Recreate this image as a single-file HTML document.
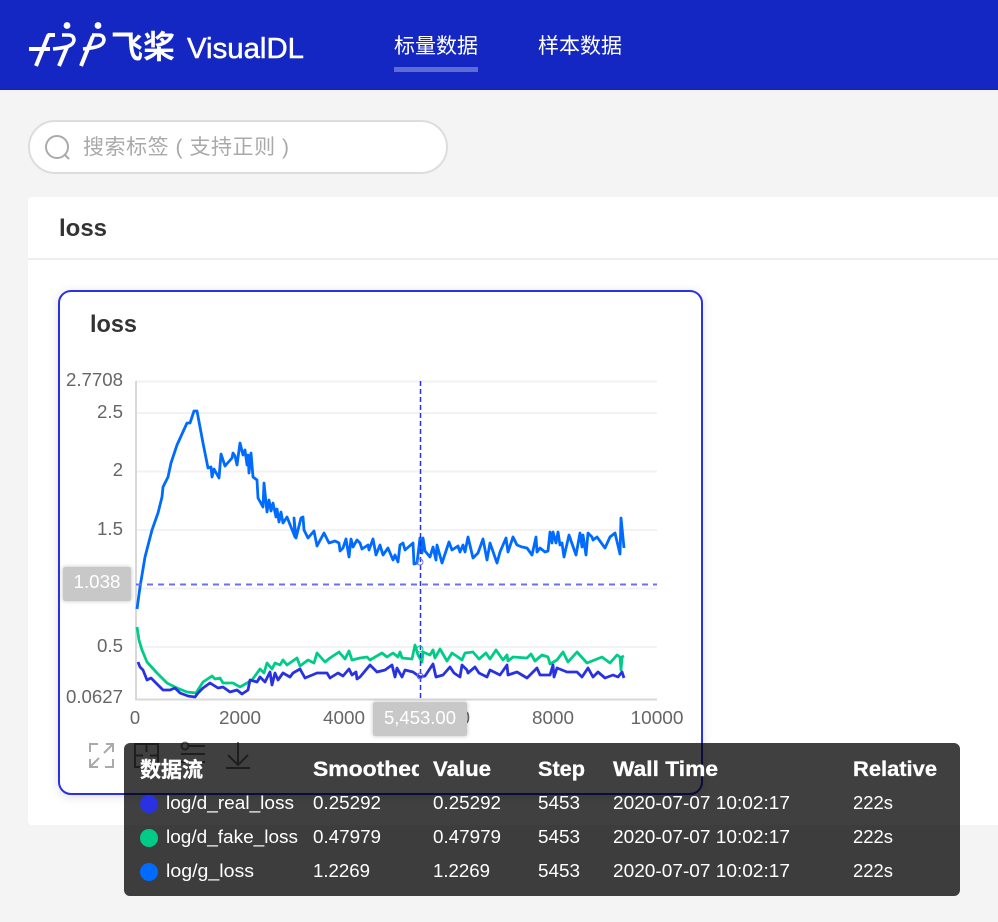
<!DOCTYPE html>
<html><head><meta charset="utf-8"><title>VisualDL</title>
<style>
html,body{margin:0;padding:0;width:998px;height:922px;overflow:hidden;background:#f4f4f4}
svg{position:absolute;left:0;top:0}
text{font-family:"Liberation Sans","Noto Sans CJK SC",sans-serif}
.ax{font-size:18.500px;fill:#666}
.hd{font-size:21px;font-weight:bold;fill:#fff}
.td{font-size:18.500px;fill:#fff}
.ln{fill:none;stroke-width:2.800;stroke-linejoin:round}
</style></head><body>
<svg width="998" height="922" viewBox="0 0 998 922" xmlns="http://www.w3.org/2000/svg">
<defs>
<filter id="sh" x="-20%" y="-20%" width="140%" height="140%"><feDropShadow dx="0" dy="2" stdDeviation="5" flood-color="#000" flood-opacity=".12"/></filter>
<filter id="bx" x="-10%" y="-20%" width="120%" height="140%"><feDropShadow dx="0" dy="0" stdDeviation="2" flood-color="#000" flood-opacity=".25"/></filter>
<clipPath id="cs"><rect x="300" y="750" width="119" height="40"/></clipPath>
</defs>
<rect width="998" height="90" fill="#1527c2"/>
<g fill="none" stroke="#fff" stroke-width="4">
<path d="M29 49H50"/>
<path d="M36 66L48 36L49 35H55"/>
<path d="M59 66L67 47"/>
<path d="M62 35H68C75 35 75 41 72 44C69 47 62 48 53 49" stroke-width="3.600"/>
<path d="M81 66L93 36"/>
<path d="M92 35H98C105 35 105 41 102 44C99 47 92 48 83 49" stroke-width="3.600"/>
</g>
<circle cx="67" cy="25.500" r="3.400" fill="#fff"/><circle cx="98" cy="25.500" r="3.400" fill="#fff"/>
<text x="111" y="58" font-size="32" font-weight="bold" fill="#fff" textLength="64" lengthAdjust="spacingAndGlyphs">飞桨</text>
<text x="187" y="58" font-size="29" fill="#fff" textLength="117" lengthAdjust="spacingAndGlyphs" stroke="#fff" stroke-width=".5">VisualDL</text>
<text x="394" y="53" font-size="21" fill="#fff" textLength="84">标量数据</text>
<rect x="394" y="67" width="84" height="5" fill="#5e6bd1"/>
<text x="538" y="53" font-size="21" fill="#fff" textLength="84">样本数据</text>

<rect x="29" y="121" width="418" height="52" rx="26" fill="#fff" stroke="#ddd" stroke-width="2"/>
<circle cx="57" cy="147" r="11" fill="none" stroke="#aaa" stroke-width="2"/>
<path d="M65 155L69 159" stroke="#aaa" stroke-width="2"/>
<text x="83" y="154" font-size="21" fill="#a9a9a9" textLength="206">搜索标签 ( 支持正则 )</text>

<rect x="28" y="197" width="980" height="628" rx="4" fill="#fff"/>
<rect x="28" y="258" width="970" height="2" fill="#eee"/>
<text x="59" y="236" font-size="24" font-weight="bold" fill="#333" textLength="48" lengthAdjust="spacingAndGlyphs">loss</text>

<rect x="59" y="291" width="643" height="503" rx="12" fill="#fff" stroke="#2932e1" stroke-width="2" filter="url(#sh)"/>
<text x="90" y="332" font-size="24" font-weight="bold" fill="#333" textLength="47" lengthAdjust="spacingAndGlyphs">loss</text>

<g stroke="#f2f2f2" stroke-width="2">
<path d="M136 381.500H657M136 413H657M136 471.500H657M136 530H657M136 588.500H657M136 647H657"/>
</g>
<path d="M136 381V699.500H657" fill="none" stroke="#d8d8d8" stroke-width="2"/>
<g class="ax" text-anchor="end">
<text x="123" y="386" textLength="57" lengthAdjust="spacingAndGlyphs">2.7708</text>
<text x="123" y="418" textLength="26" lengthAdjust="spacingAndGlyphs">2.5</text>
<text x="123" y="476">2</text>
<text x="123" y="535" textLength="26" lengthAdjust="spacingAndGlyphs">1.5</text>
<text x="123" y="652" textLength="26" lengthAdjust="spacingAndGlyphs">0.5</text>
<text x="123" y="703" textLength="57" lengthAdjust="spacingAndGlyphs">0.0627</text>
</g>
<g class="ax" text-anchor="middle">
<text x="135" y="724">0</text>
<text x="240" y="724" textLength="42" lengthAdjust="spacingAndGlyphs">2000</text>
<text x="344" y="724" textLength="42" lengthAdjust="spacingAndGlyphs">4000</text>
<text x="449" y="724" textLength="42" lengthAdjust="spacingAndGlyphs">6000</text>
<text x="553" y="724" textLength="42" lengthAdjust="spacingAndGlyphs">8000</text>
<text x="657" y="724" textLength="53" lengthAdjust="spacingAndGlyphs">10000</text>
</g>

<polyline class="ln" stroke="#006bff" points="137,609 140,587 145,557 152,530 158,513 162,497 163,487 168,477 171,463 177,445 187,423 190,423 194,411 197,411 203,443 208,468 211,467 212,477 214,469 219,478 221,454 225,466 232,458 233,453 235,456 237,465 240,443 243,455 245,450 247,465 248,455 249,473 251,453 253,477 257,480 258,498 263,507 264,483 267,512 269,500 271,511 273,503 276,517 277,509 279,522 281,512 283,523 287,517 295,537 294,518 296,538 301,518 303,517 304,530 308,538 314,531 317,546 324,533 329,543 335,541 339,543 340,551 343,548 346,539 349,557 351,539 353,547 357,540 360,543 362,549 368,545 369,550 373,539 376,555 380,545 383,555 388,548 393,560 395,555 398,562 400,545 403,543 405,550 413,543 414,564 417,563 420,538 422,553 423,538 425,551 430,557 433,547 436,560 437,545 442,563 449,542 452,550 458,546 460,552 463,545 465,552 468,537 473,558 478,553 483,539 487,560 490,543 497,563 500,552 506,538 508,552 513,537 517,545 522,547 527,548 532,555 536,537 537,552 540,548 545,552 548,551 550,532 552,543 553,532 556,543 558,532 560,545 562,543 564,557 569,535 576,555 580,533 582,547 583,535 586,555 588,533 592,537 593,540 597,537 605,548 610,537 615,533 620,554 621,518 624,548"/>
<polyline class="ln" stroke="#00cc88" points="137,627 139,640 142,650 147,662 157,673 167,683 177,688 187,692 196,693 203,682 212,676 215,679 220,678 223,683 233,683 240,687 247,683 252,680 260,669 264,673 267,663 272,669 275,663 280,665 283,660 287,665 297,658 300,666 308,660 314,663 317,653 325,662 330,658 339,652 345,659 349,651 352,660 360,658 367,657 370,660 382,653 387,657 393,653 398,657 400,652 402,658 412,659 415,645 418,655 422,662 423,652 430,655 433,650 435,658 440,649 447,661 452,653 458,657 462,660 465,653 473,652 479,659 486,653 490,659 496,650 503,660 507,655 508,661 513,657 527,658 531,654 535,661 542,655 548,657 550,664 557,660 563,652 568,662 577,652 587,663 602,657 610,663 617,655 620,657 621,670 622,657 624,656"/>
<polyline class="ln" stroke="#2932e1" points="138,662 140,667 143,670 147,680 151,678 163,690 170,690 175,688 180,693 188,696 195,697 198,693 203,688 210,683 218,688 223,687 230,692 237,690 242,694 248,690 250,680 257,682 260,677 265,682 270,672 272,685 275,673 278,680 283,673 290,677 293,673 300,669 305,678 317,673 327,673 330,678 338,673 343,676 349,669 352,675 356,672 357,679 360,677 370,665 377,672 385,670 392,665 395,677 397,668 402,677 405,670 413,672 420,677 425,676 433,664 436,677 443,675 450,667 454,673 460,677 462,665 467,670 468,673 475,667 479,673 487,677 490,670 500,675 507,665 508,675 517,672 527,678 537,668 540,675 550,675 553,665 554,677 557,668 567,672 577,672 582,677 588,668 593,677 598,672 605,678 613,675 618,677 622,672 624,678"/>

<path d="M420.500 381V699" stroke="#2932e1" stroke-width="1.500" stroke-dasharray="5 3" fill="none"/>
<path d="M136 584.500H657" stroke="#6b6ff0" stroke-width="2" stroke-dasharray="6 5" fill="none"/>
<circle cx="420" cy="562" r="3" fill="none" stroke="#7a6fe0" stroke-width="1"/>
<circle cx="420" cy="649" r="3" fill="none" stroke="#00cc88" stroke-width="1"/>
<circle cx="420" cy="676" r="3" fill="none" stroke="#6b6ff0" stroke-width="1"/>

<rect x="63" y="567" width="68" height="34" rx="2" fill="#c8c8c8" filter="url(#bx)"/>
<text x="97" y="588" font-size="18.500" fill="#fff" text-anchor="middle" textLength="47" lengthAdjust="spacingAndGlyphs">1.038</text>
<rect x="373" y="702" width="94" height="34" rx="2" fill="#c8c8c8" filter="url(#bx)"/>
<text x="420" y="724" font-size="18.500" fill="#fff" text-anchor="middle" textLength="72" lengthAdjust="spacingAndGlyphs">5,453.00</text>

<g fill="none" stroke="#aaa" stroke-width="2">
<path d="M90 752V744H98M106 744H113V752M90 759V767H98M113 759V767H105M112 745L104 753M91 766L99 758"/>
</g>
<g fill="none" stroke="#777" stroke-width="2">
<rect x="135" y="744" width="23" height="23"/>
<path d="M146.500 744V752M135 755.500H143M158 755.500H150"/>
<circle cx="185" cy="746" r="3.500"/>
<path d="M189 746H205M181 754H205M181 762H205"/>
<path d="M238 742V765M228 755L238 765L248 755M226 768H250"/>
</g>

<rect x="124" y="743" width="836" height="153" rx="6" fill="#000" fill-opacity=".75"/>
<text x="140" y="777" class="hd" textLength="63" lengthAdjust="spacingAndGlyphs" stroke="#fff" stroke-width=".3">数据流</text>
<text x="313" y="776" class="hd" clip-path="url(#cs)" textLength="112" lengthAdjust="spacingAndGlyphs" stroke="#fff" stroke-width=".3">Smoothed</text>
<text x="433" y="776" class="hd" textLength="58" lengthAdjust="spacingAndGlyphs" stroke="#fff" stroke-width=".3">Value</text>
<text x="538" y="776" class="hd" textLength="47" lengthAdjust="spacingAndGlyphs" stroke="#fff" stroke-width=".3">Step</text>
<text x="613" y="776" class="hd" textLength="105" lengthAdjust="spacingAndGlyphs" stroke="#fff" stroke-width=".3">Wall Time</text>
<text x="853" y="776" class="hd" textLength="84" lengthAdjust="spacingAndGlyphs" stroke="#fff" stroke-width=".3">Relative</text>

<circle cx="149" cy="804" r="9" fill="#2932e1"/>
<circle cx="149" cy="838" r="9" fill="#00cc88"/>
<circle cx="149" cy="872" r="9" fill="#006bff"/>
<g class="td">
<text x="166" y="809" textLength="128" lengthAdjust="spacingAndGlyphs">log/d_real_loss</text>
<text x="313" y="809" textLength="68" lengthAdjust="spacingAndGlyphs">0.25292</text>
<text x="433" y="809" textLength="68" lengthAdjust="spacingAndGlyphs">0.25292</text>
<text x="538" y="809" textLength="42" lengthAdjust="spacingAndGlyphs">5453</text>
<text x="613" y="809" textLength="177" lengthAdjust="spacingAndGlyphs">2020-07-07 10:02:17</text>
<text x="853" y="809" textLength="40" lengthAdjust="spacingAndGlyphs">222s</text>
<text x="166" y="843" textLength="132" lengthAdjust="spacingAndGlyphs">log/d_fake_loss</text>
<text x="313" y="843" textLength="68" lengthAdjust="spacingAndGlyphs">0.47979</text>
<text x="433" y="843" textLength="68" lengthAdjust="spacingAndGlyphs">0.47979</text>
<text x="538" y="843" textLength="42" lengthAdjust="spacingAndGlyphs">5453</text>
<text x="613" y="843" textLength="177" lengthAdjust="spacingAndGlyphs">2020-07-07 10:02:17</text>
<text x="853" y="843" textLength="40" lengthAdjust="spacingAndGlyphs">222s</text>
<text x="166" y="877" textLength="88" lengthAdjust="spacingAndGlyphs">log/g_loss</text>
<text x="313" y="877" textLength="57" lengthAdjust="spacingAndGlyphs">1.2269</text>
<text x="433" y="877" textLength="57" lengthAdjust="spacingAndGlyphs">1.2269</text>
<text x="538" y="877" textLength="42" lengthAdjust="spacingAndGlyphs">5453</text>
<text x="613" y="877" textLength="177" lengthAdjust="spacingAndGlyphs">2020-07-07 10:02:17</text>
<text x="853" y="877" textLength="40" lengthAdjust="spacingAndGlyphs">222s</text>
</g>
</svg>
</body></html>
